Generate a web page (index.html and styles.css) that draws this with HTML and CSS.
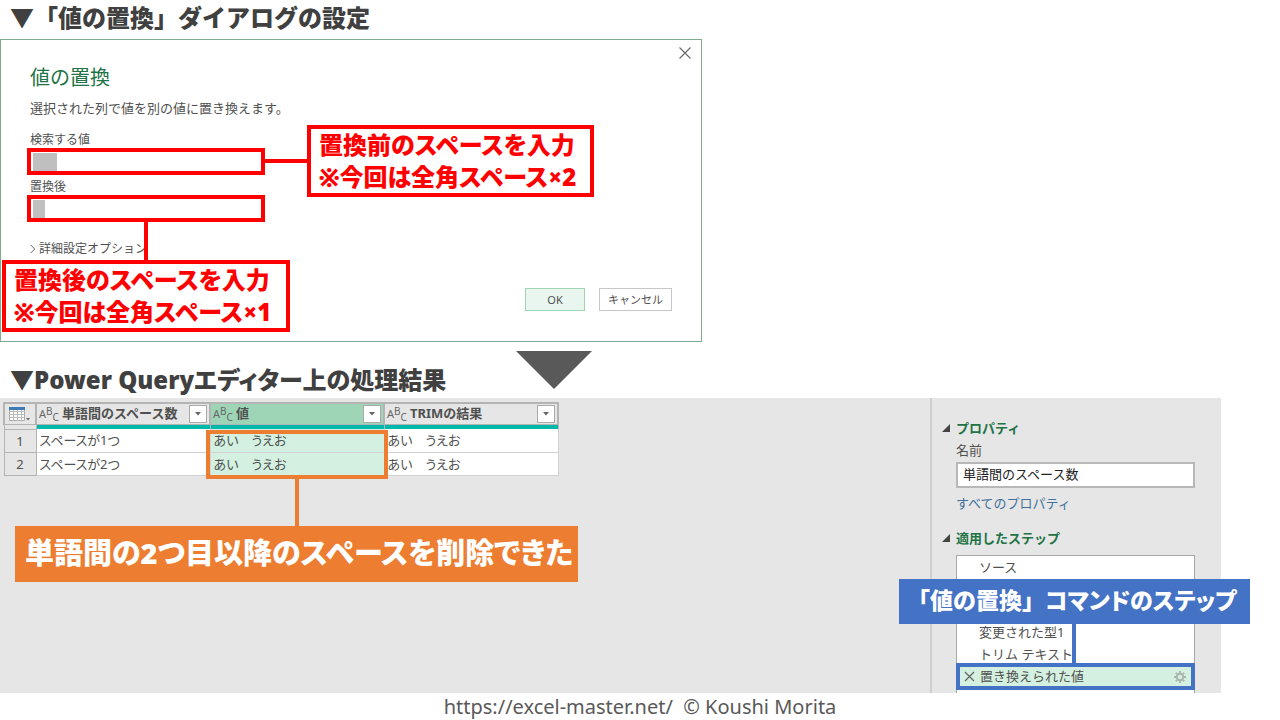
FILE: index.html
```html
<!DOCTYPE html>
<html lang="ja">
<head>
<meta charset="utf-8">
<meta name="viewport" content="width=device-width, initial-scale=1">
<title>「値の置換」ダイアログの設定</title>
<link rel="stylesheet" href="styles.css">
</head>
<body>
<main>
  <h1 class="heading">▼「値の置換」ダイアログの設定</h1>

  <section class="dialog" aria-labelledby="dialog-title">
    <button class="close" type="button" aria-label="閉じる">
      <svg width="12" height="12" viewBox="0 0 12 12"><path d="M.5 .5l11 11M11.5 .5l-11 11" stroke="#666" stroke-width="1.1" fill="none"/></svg>
    </button>
    <h2 class="dialog-title" id="dialog-title">値の置換</h2>
    <p class="dialog-desc">選択された列で値を別の値に置き換えます。</p>
    <div class="field">
      <label for="find">検索する値</label>
      <input class="space-input two" id="find" type="text" value="　　">
    </div>
    <div class="field">
      <label for="replace">置換後</label>
      <input class="space-input one" id="replace" type="text" value="　">
    </div>
    <button class="advanced" type="button">
      <svg width="6" height="10" viewBox="0 0 6 10"><path d="M.7 1l4 4-4 4" stroke="#666" fill="none"/></svg>
      詳細設定オプション
    </button>
    <div class="actions">
      <button class="btn ok" type="button">OK</button>
      <button class="btn" type="button">キャンセル</button>
    </div>
    <div class="line red before-line"></div>
    <div class="line red after-line"></div>
    <p class="note before-note">置換前のスペースを入力<br>※今回は全角スペース×2</p>
    <p class="note after-note">置換後のスペースを入力<br>※今回は全角スペース×1</p>
  </section>

  <div class="result-head">
    <h2 class="heading">▼Power Queryエディター上の処理結果</h2>
    <svg width="76" height="38" viewBox="0 0 76 38"><path d="M0 0h76L38 38z" fill="#595959"/></svg>
  </div>

  <section class="editor">
    <div class="grid-pane">
      <table class="data">
        <colgroup><col class="c-num"><col><col><col></colgroup>
        <thead>
          <tr>
            <th class="corner">
              <svg width="22" height="16" viewBox="0 0 22 16"><path d="M.5 1.500h15v13h-15z" fill="#fff" stroke="#aaa"/><path d="M.5 5.500h15M.5 8.500h15M.5 11.500h15M4.500 4v11M8.500 4v11M12.500 4v11" stroke="#bbb" fill="none"/><path d="M0 1h16v3H0z" fill="#3f7ab8"/><path d="M17 12h4l-2 2.500z" fill="#666"/></svg>
            </th>
            <th><div class="col-head"><span class="abc">A<sup>B</sup><sub>C</sub></span><span class="name">単語間のスペース数</span><button class="filter" type="button" aria-label="フィルター"><svg width="6" height="4" viewBox="0 0 6 4"><path d="M0 0h6L3 3.500z" fill="#666"/></svg></button></div></th>
            <th class="sel"><div class="col-head"><span class="abc">A<sup>B</sup><sub>C</sub></span><span class="name">値</span><button class="filter" type="button" aria-label="フィルター"><svg width="6" height="4" viewBox="0 0 6 4"><path d="M0 0h6L3 3.500z" fill="#666"/></svg></button></div></th>
            <th><div class="col-head"><span class="abc">A<sup>B</sup><sub>C</sub></span><span class="name">TRIMの結果</span><button class="filter" type="button" aria-label="フィルター"><svg width="6" height="4" viewBox="0 0 6 4"><path d="M0 0h6L3 3.500z" fill="#666"/></svg></button></div></th>
          </tr>
          <tr class="quality"><td></td><td></td><td></td><td></td></tr>
        </thead>
        <tbody>
          <tr><th class="num" scope="row">1</th><td>スペースが1つ</td><td class="sel">あい　うえお</td><td>あい　うえお</td></tr>
          <tr><th class="num" scope="row">2</th><td>スペースが2つ</td><td class="sel">あい　うえお</td><td>あい　うえお</td></tr>
        </tbody>
      </table>
      <div class="result-frame"></div>
      <div class="line orange result-line"></div>
      <p class="banner result-banner">単語間の2つ目以降のスペースを削除できた</p>
    </div>

    <aside class="settings">
      <h3 class="group"><svg width="8" height="8" viewBox="0 0 8 8"><path d="M8 0v8H0z" fill="#444"/></svg>プロパティ</h3>
      <div class="group-body">
        <label class="name-label" for="qname">名前</label>
        <input class="name-input" id="qname" type="text" value="単語間のスペース数">
        <a class="all-props" href="#">すべてのプロパティ</a>
      </div>
      <h3 class="group steps-title"><svg width="8" height="8" viewBox="0 0 8 8"><path d="M8 0v8H0z" fill="#444"/></svg>適用したステップ</h3>
      <ul class="steps">
        <li>ソース</li>
        <li class="later">変更された型1</li>
        <li>トリム テキスト</li>
        <li class="current">
          <svg width="11" height="11" viewBox="0 0 11 11"><path d="M1 1l9 9M10 1l-9 9" stroke="#666" stroke-width="1.300" fill="none"/></svg>
          <span>置き換えられた値</span>
          <svg class="gear" width="12" height="12" viewBox="0 0 12 12"><circle cx="6" cy="6" r="3.200" fill="none" stroke="#a9b5ae" stroke-width="1.900"/><path d="M6 0v2M6 10v2M0 6h2M10 6h2M1.800 1.800l1.400 1.400M8.800 8.800l1.400 1.400M10.200 1.800L8.800 3.200M3.200 8.800l-1.400 1.400" stroke="#a9b5ae" stroke-width="1.900"/></svg>
        </li>
      </ul>
      <div class="line blue step-line"></div>
      <p class="banner step-banner"><span class="quote">「値の置換」</span>コマンドのステップ</p>
    </aside>
  </section>
</main>
<footer class="credit">https://excel-master.net/&nbsp; © Koushi Morita</footer>
</body>
</html>
```
FILE: styles.css
```css
* { box-sizing: border-box; }
body {
  margin: 0;
  background: #fff;
  color: #505050;
  font-family: "Noto Sans", "Noto Sans CJK JP", sans-serif;
  font-size: 13px;
  line-height: 20px;
}
h1, h2, h3, p, ul { margin: 0; padding: 0; }
button, input { font: inherit; color: inherit; border-radius: 0; }
svg { display: block; flex: none; }

.heading, .note, .banner {
  font-weight: 900;
  white-space: nowrap;
}
.note, .banner, .result-head .heading { font-feature-settings: "palt"; }
.quote { font-feature-settings: normal; }
.heading {
  padding-left: 10px;
  color: #404040;
  font-size: 24px;
  line-height: 35px;
}
h1.heading { padding-bottom: 4px; }

.dialog {
  position: relative;
  max-width: 702px;
  padding: 24px 29px 30px;
  border: 1px solid #7fab92;
}
.close {
  position: absolute;
  top: 6px;
  right: 9px;
  padding: 1px;
  border: 0;
  background: none;
}
.dialog-title {
  margin-bottom: 6px;
  color: #217346;
  font-size: 20px;
  font-weight: 400;
  line-height: 28px;
}
.dialog-desc { margin-bottom: 10px; }
.field {
  display: flex;
  flex-direction: column;
  width: 238px;
  margin-left: -3px;
}
.field label {
  padding: 3px 3px 0;
  font-size: 12px;
  line-height: 17px;
}
.space-input {
  height: 27px;
  padding: 0 4px;
  border: 4px solid #f00;
  background: #fff linear-gradient(#bfbfbf, #bfbfbf) no-repeat 2px 1px;
  font-size: 12px;
}
.space-input.two { background-size: 24px 18px; }
.space-input.one { background-size: 12px 18px; }
.advanced {
  display: flex;
  align-items: center;
  gap: 3px;
  margin-top: 18px;
  padding: 0;
  border: 0;
  background: none;
  font-size: 12px;
  line-height: 18px;
}
.actions {
  display: flex;
  justify-content: flex-end;
  gap: 14px;
  margin-top: 30px;
}
.btn {
  min-width: 60px;
  height: 23px;
  padding: 0 8px;
  border: 1px solid #c6c6c6;
  background: #fff;
  font-size: 11px;
  line-height: 20px;
}
.btn.ok { border-color: #9fd5b7; background: #e9f5ef; }

.line { position: absolute; }
.red { background: #f00; }
.orange { background: #ed7d31; }
.blue { background: #4472c4; }
.before-line { left: 264px; top: 119px; width: 42px; height: 4px; }
.after-line { left: 143px; top: 182px; width: 4px; height: 40px; }
.note {
  position: absolute;
  padding: 0 8px;
  border: 4px solid #f00;
  background: #fff;
  color: #f00;
  font-size: 24px;
  line-height: 32px;
}
.before-note { left: 306px; top: 85px; width: 287px; }
.after-note { left: 1px; top: 220px; width: 288px; }

.result-head {
  display: grid;
  grid-template-columns: 516px auto;
  justify-content: start;
  padding-top: 9px;
  padding-bottom: 1px;
}
.result-head .heading { padding-top: 11px; }

.editor {
  display: grid;
  grid-template-columns: 1fr 291px;
  margin-right: 59px;
  background: #e6e6e6;
}
.grid-pane { position: relative; padding: 4px 3px; }
.data {
  width: 556px;
  table-layout: fixed;
  border-collapse: collapse;
  font-size: 13px;
  line-height: 20px;
}
.c-num { width: 32px; }
.data th, .data td { padding: 0 0 0 3px; text-align: left; }
.data thead th { height: 21px; border: 2px solid #b4b4b4; border-bottom-width: 1px; background: #e6e6e6; padding-left: 2px; }
.data thead .corner { padding-left: 4px; }
.data thead .sel { background: #9fd5b7; }
.col-head { display: flex; align-items: center; height: 19px; line-height: 19px; }
.abc { width: 23px; color: #666; font-size: 11px; font-weight: 400; line-height: 16px; }
.abc sup, .abc sub { font-size: 10px; line-height: 0; }
.abc sup { vertical-align: 3px; }
.abc sub { vertical-align: -3px; }
.name { flex: 1; }
.filter {
  display: grid;
  place-items: center;
  width: 18px;
  height: 18px;
  margin-right: 2px;
  padding: 0;
  border: 1px solid #aaa;
  background: #fff;
}
.quality td { height: 5px; border-right: 1px solid #b4b4b4; background: #01b8aa; }
.quality td:first-child { border: 1px solid #b4b4b4; background: #e6e6e6; }
.data tbody td { height: 23px; border: 1px solid #d2d2d2; border-top: 0; background: #fff; font-feature-settings: "palt"; }
.data tbody .sel { background: #d4f0e0; }
.data tbody .num { border: 1px solid #b4b4b4; background: #e6e6e6; padding: 0; font-weight: 400; text-align: center; }
.result-frame {
  position: absolute;
  left: 206px;
  top: 32px;
  width: 182px;
  height: 49px;
  border: 4px solid #ed7d31;
}
.result-line { left: 295px; top: 81px; width: 4px; height: 47px; }
.banner { position: absolute; color: #fff; }
.result-banner {
  left: 15px;
  top: 128px;
  padding: 0 10px 2px;
  width: 563px;
  background: #ed7d31;
  font-size: 29px;
  line-height: 54px;
}

.settings {
  position: relative;
  padding: 20px 26px 0 10px;
  border-left: 2px solid #cfcfcf;
}
.group {
  display: flex;
  align-items: center;
  gap: 6px;
  color: #217346;
  font-size: 13px;
  line-height: 20px;
}
.group-body { display: flex; flex-direction: column; align-items: flex-start; padding-left: 14px; }
.name-label { line-height: 24px; }
.name-input {
  width: 100%;
  height: 26px;
  padding: 0 5px 3px;
  border: 2px solid #b8b8b8;
  background: #fff;
  color: #222;
}
.all-props { margin-top: 5px; color: #41719c; text-decoration: none; }
.steps-title { margin-top: 15px; }
.steps {
  margin: 7px 0 0 14px;
  border: 1px solid #a8a8a8;
  border-bottom: 0;
  background: #fff;
  list-style: none;
  line-height: 22px;
  padding-bottom: 5px;
}
.steps li { padding-left: 22px; }
.steps .later { margin-top: 43px; }
.steps .current {
  display: flex;
  align-items: center;
  gap: 5px;
  margin: -2px -1px;
  padding: 0 5px 0 4px;
  border: 4px solid #4472c4;
  background: #d4f0e0;
  line-height: 19px;
}
.gear { margin-left: auto; }
.step-line { right: 145px; top: 226px; width: 4px; height: 40px; }
.step-banner {
  right: -29px;
  top: 181px;
  width: 351px;
  padding: 0 8px 2px;
  background: #4472c4;
  font-size: 23px;
  line-height: 43px;
}
.credit {
  color: #595959;
  font-family: "Noto Sans", sans-serif;
  font-size: 20px;
  line-height: 27px;
  text-align: center;
}
```
